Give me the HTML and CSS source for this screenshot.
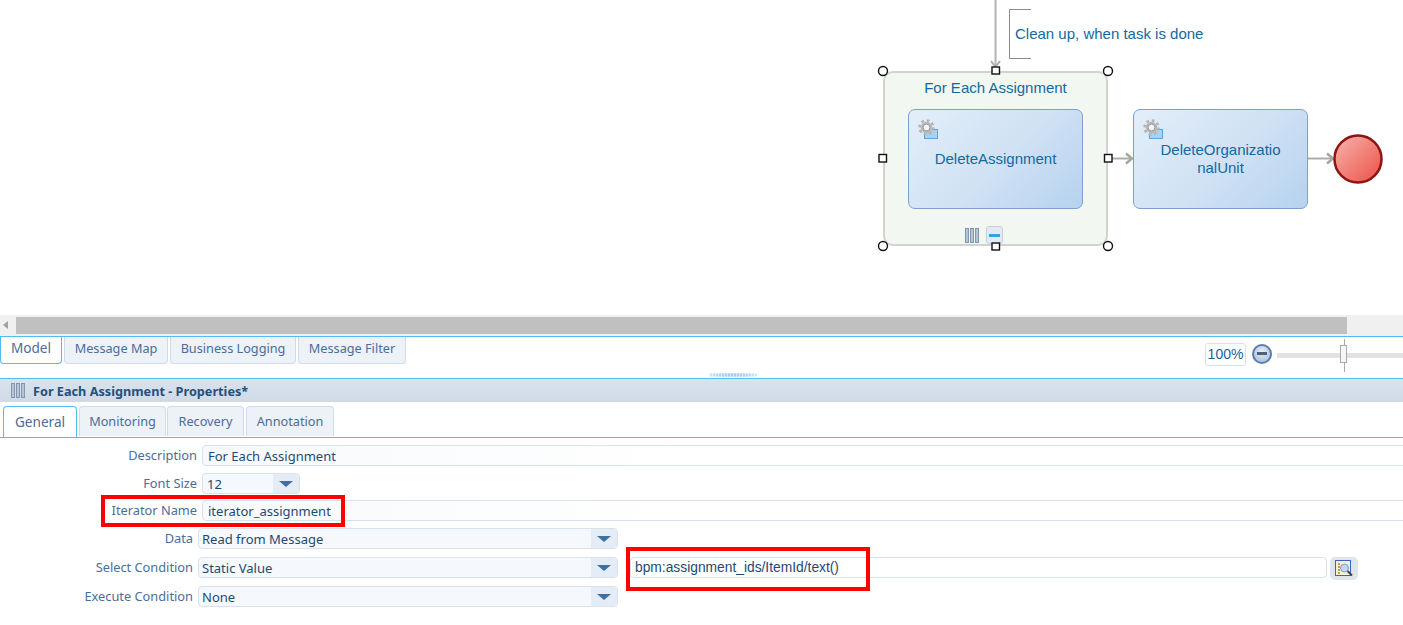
FILE: index.html
```html
<!DOCTYPE html>
<html lang="en">
<head>
<meta charset="utf-8">
<title>For Each Assignment - Properties</title>
<link rel="stylesheet" href="styles.css">
</head>
<body>
<svg width="0" height="0" class="defs">
  <defs>
    <g id="gear">
      <circle cx="8.500" cy="8.500" r="7" fill="none" stroke="#b4b4b4" stroke-width="2.500" stroke-dasharray="2.750 2.750"/>
      <circle cx="8.500" cy="8.500" r="5.800" fill="#b8b8b8"/>
      <circle cx="8.500" cy="8.500" r="3.400" fill="#f4f4f4" stroke="#9a9a9a" stroke-width="1"/>
    </g>
    <g id="bars" fill="#b5c4d6" stroke="#8398ae" stroke-width="1">
      <rect x="0.500" y="0.500" width="3" height="14"/>
      <rect x="5.500" y="0.500" width="3" height="14"/>
      <rect x="10.500" y="0.500" width="3" height="14"/>
    </g>
    <linearGradient id="endfill" x1="0" y1="0" x2="1" y2="1">
      <stop offset="0" stop-color="#f7b5ae"/>
      <stop offset="1" stop-color="#ec4f46"/>
    </linearGradient>
  </defs>
</svg>

<main class="canvas">
  <svg class="wires" width="1403" height="316">
    <path d="M995.500 0V68" stroke="#b3b5b0" stroke-width="2" fill="none"/>
    <path d="M991 61l4.500 6 4.500-6" stroke="#a9aea6" stroke-width="2" fill="none"/>
    <path d="M1031 9.500H1009.500V58.500H1031" stroke="#8c8c8c" fill="none"/>
    <path d="M1112 158.500H1132" stroke="#a9aea6" stroke-width="2" fill="none"/>
    <path d="M1126 153.500l6 5-6 5" stroke="#a0a89f" stroke-width="2.500" fill="none"/>
    <path d="M1308 158.500H1333" stroke="#a9aea6" stroke-width="2" fill="none"/>
    <path d="M1327 153.500l6 5-6 5" stroke="#a0a89f" stroke-width="2.500" fill="none"/>
    <circle cx="1358" cy="159" r="23.500" fill="url(#endfill)" stroke="#8f1414" stroke-width="2.500"/>
  </svg>
  <div class="annotation">Clean up, when task is done</div>
  <div class="loop">
    <div class="loop-title">For Each Assignment</div>
    <div class="loop-marks">
      <svg width="14" height="15" viewBox="0 0 14 15"><use href="#bars"/></svg>
      <span class="collapse"><i></i></span>
    </div>
  </div>
  <div class="task task-inner">
    <svg class="task-icon" width="22" height="22" viewBox="0 0 22 22"><rect x="6.500" y="10.500" width="13" height="9" fill="#a9d2f2" stroke="#5ca5db"/><use href="#gear"/></svg>
    <span>DeleteAssignment</span>
  </div>
  <div class="task task-next">
    <svg class="task-icon" width="22" height="22" viewBox="0 0 22 22"><rect x="6.500" y="10.500" width="13" height="9" fill="#a9d2f2" stroke="#5ca5db"/><use href="#gear"/></svg>
    <span>DeleteOrganizatio<br>nalUnit</span>
  </div>
  <svg class="handles" width="1403" height="316">
    <g fill="#fff" stroke="#111" stroke-width="1.400">
      <circle cx="883" cy="71" r="4.500"/>
      <circle cx="1108" cy="71" r="4.500"/>
      <circle cx="883" cy="246" r="4.500"/>
      <circle cx="1108" cy="246" r="4.500"/>
      <rect x="992" y="67" width="7.500" height="7"/>
      <rect x="879" y="154.500" width="7.500" height="7.500"/>
      <rect x="1104.500" y="154.500" width="7.500" height="7.500"/>
      <rect x="992" y="243" width="7.500" height="7"/>
    </g>
  </svg>
</main>

<div class="hscroll">
  <span class="scroll-arrow"></span>
  <div class="scroll-thumb"></div>
</div>

<nav class="view-bar">
  <div class="tabs view-tabs">
    <span class="tab active">Model</span>
    <span class="tab">Message Map</span>
    <span class="tab">Business Logging</span>
    <span class="tab">Message Filter</span>
  </div>
  <div class="zoom-tool">
    <span class="zoom-value">100%</span>
    <span class="zoom-minus"><i></i></span>
    <div class="zoom-track"><span class="zoom-stem"></span><span class="zoom-thumb"></span></div>
  </div>
  <span class="grip"></span>
</nav>

<section class="props">
  <header class="props-head">
    <svg width="14" height="15" viewBox="0 0 14 15"><use href="#bars"/></svg>
    <h1>For Each Assignment - Properties*</h1>
  </header>
  <div class="tabs prop-tabs">
    <span class="tab active">General</span>
    <span class="tab">Monitoring</span>
    <span class="tab">Recovery</span>
    <span class="tab">Annotation</span>
  </div>
  <div class="form">
    <div class="row">
      <label class="label">Description</label>
      <div class="input grow">For Each Assignment</div>
    </div>
    <div class="row">
      <label class="label">Font Size</label>
      <div class="select small"><span>12</span><b class="caret"></b></div>
    </div>
    <div class="row row-iter">
      <label class="label">Iterator Name</label>
      <div class="input grow">iterator_assignment</div>
    </div>
    <div class="row row-wide row-data">
      <label class="label">Data</label>
      <div class="select wide"><span>Read from Message</span><b class="caret"></b></div>
    </div>
    <div class="row row-wide row-select">
      <label class="label">Select Condition</label>
      <div class="select wide"><span>Static Value</span><b class="caret"></b></div>
      <div class="input xpath">bpm:assignment_ids/ItemId/text()</div>
      <span class="lookup">
        <svg width="18" height="18" viewBox="0 0 18 18">
          <rect x="0.500" y="0.500" width="15" height="15" fill="#f3f0e0" stroke="#3c62c4"/>
          <path d="M3 4h2M3 7h2M3 10h2M3 13h2" stroke="#d39a3c" stroke-width="2"/>
          <circle cx="9.500" cy="8" r="4" fill="#bcd8f5" stroke="#7f9cc4"/>
          <path d="M12.500 11l4.500 4.500" stroke="#444" stroke-width="2"/>
        </svg>
      </span>
    </div>
    <div class="row row-wide">
      <label class="label">Execute Condition</label>
      <div class="select wide"><span>None</span><b class="caret"></b></div>
    </div>
  </div>
</section>

<div class="mark mark-iter"></div>
<div class="mark mark-xpath"></div>
</body>
</html>
```
FILE: styles.css
```css
html, body {
  margin: 0;
  padding: 0;
  background: #fff;
}
body {
  width: 1403px;
  height: 625px;
  overflow: hidden;
  position: relative;
  font-family: "Noto Sans", "Liberation Sans", sans-serif;
  font-size: 13px;
}
.defs { position: absolute; }

/* diagram */
.canvas {
  position: relative;
  height: 315px;
  font-family: "Liberation Sans", sans-serif;
  font-size: 15px;
  color: #12699f;
}
.wires, .handles { position: absolute; left: 0; top: 0; }
.handles { pointer-events: none; }
.annotation { position: absolute; left: 1015px; top: 25px; line-height: 17px; }
.loop {
  position: absolute;
  left: 883px;
  top: 71px;
  width: 221px;
  height: 171px;
  border: 2px solid #cfd5cd;
  border-radius: 10px;
  background: #f3f7f1;
}
.loop-title { text-align: center; margin-top: 6px; line-height: 17px; }
.loop-marks {
  position: absolute;
  left: 80px;
  bottom: 0;
  display: flex;
  align-items: center;
  gap: 7px;
}
.collapse {
  width: 15px;
  height: 16px;
  border: 1px solid #c5cfdb;
  border-radius: 3px;
  background: #e3eaf3;
  display: flex;
  align-items: center;
  justify-content: center;
}
.collapse i { width: 11px; height: 3px; background: #35a0e3; display: block; }
.task {
  position: absolute;
  top: 109px;
  width: 173px;
  height: 98px;
  border: 1px solid #7f9fd0;
  border-radius: 7px;
  background: linear-gradient(135deg, #e3eef9 0%, #cfe1f4 55%, #b6d2ee 100%);
  display: flex;
  align-items: center;
  justify-content: center;
  text-align: center;
  line-height: 18px;
}
.task-inner { left: 908px; }
.task-next { left: 1133px; }
.task-icon { position: absolute; left: 9px; top: 9px; }

/* scrollbar */
.hscroll {
  position: relative;
  height: 21px;
  background: #f0f0f0;
  box-sizing: border-box;
  padding: 2px 0 2px 16px;
}
.scroll-thumb { width: 1331px; height: 17px; background: #c0c0c0; }
.scroll-arrow {
  position: absolute;
  left: 3px;
  top: 6px;
  border-style: solid;
  border-width: 4px 5px 4px 0;
  border-color: transparent #a0a0a0 transparent transparent;
}

/* tabs */
.tabs { display: flex; font-size: 12.7px; }
.tab {
  box-sizing: border-box;
  border: 1px solid #cfdcec;
  background: #edf1f8;
  color: #4b6d9b;
  text-align: center;
}
.view-bar {
  position: relative;
  height: 43px;
  box-sizing: border-box;
  border-top: 1px solid #52bdf2;
  border-bottom: 1px solid #52bdf2;
}
.view-tabs { gap: 2px; }
.view-tabs .tab {
  height: 27px;
  line-height: 22px;
  border-top: 0;
  border-radius: 0 0 4px 4px;
}
.view-tabs .tab:nth-child(1) { width: 62px; background: #fff; border-color: #52bdf2; font-size: 13.6px; border-width: 0 1px 1px 1px; }
.view-tabs .tab:nth-child(2) { width: 104px; }
.view-tabs .tab:nth-child(3) { width: 126px; }
.view-tabs .tab:nth-child(4) { width: 108px; }
.grip {
  position: absolute;
  left: 709px;
  top: 36px;
  width: 48px;
  height: 4px;
  background:
    repeating-linear-gradient(90deg, rgba(255,255,255,0.55) 0 1px, transparent 1px 3px),
    radial-gradient(ellipse at center, #9cc3ee 0%, #c3dcf6 60%, #fff 100%);
}
.zoom-tool {
  position: absolute;
  left: 1205px;
  top: 0;
  right: 0;
  height: 33px;
  display: flex;
  align-items: center;
}
.zoom-value {
  box-sizing: border-box;
  width: 41px;
  height: 23px;
  margin-top: 2px;
  border: 1px solid #d5e0ee;
  border-radius: 3px;
  color: #1b5f96;
  font-family: "Liberation Sans", sans-serif;
  font-size: 14px;
  line-height: 21px;
  text-align: center;
}
.zoom-minus {
  box-sizing: border-box;
  width: 20px;
  height: 20px;
  margin-left: 6px;
  border: 2px solid #587fae;
  border-radius: 50%;
  background: radial-gradient(circle at 50% 35%, #e8eff7, #9db8d6);
  display: flex;
  align-items: center;
  justify-content: center;
}
.zoom-minus i { width: 10px; height: 3px; background: #4d6178; display: block; }
.zoom-track {
  position: relative;
  flex: 1;
  height: 5px;
  margin-top: 3px;
  margin-left: 5px;
  background: #e2e2e2;
}
.zoom-stem {
  position: absolute;
  left: 67px;
  top: -14px;
  width: 1px;
  height: 33px;
  background: #aaa;
}
.zoom-thumb {
  position: absolute;
  left: 63px;
  top: -8px;
  width: 5px;
  height: 16px;
  background: #f3f6fa;
  border: 1px solid #aaa;
}

/* properties */
.props-head {
  height: 23px;
  background: linear-gradient(#d9e3ed, #cfdae6);
  display: flex;
  align-items: center;
  gap: 8px;
  padding-left: 11px;
}
.props-head h1 {
  margin: 0;
  font-size: 12.7px;
  font-weight: 700;
  color: #23507f;
}
.prop-tabs {
  margin-top: 4px;
  height: 31px;
  padding-left: 3px;
  gap: 2px;
  border-bottom: 1px solid #52bdf2;
}
.prop-tabs .tab {
  height: 30px;
  line-height: 28px;
  border-bottom: 0;
  border-radius: 4px 4px 0 0;
}
.prop-tabs .tab:nth-child(1) {
  width: 74px;
  height: 31px;
  margin-bottom: -1px;
  background: #fff;
  border-color: #52bdf2;
  font-size: 13.6px;
  line-height: 30px;
}
.prop-tabs .tab:nth-child(2) { width: 87px; }
.prop-tabs .tab:nth-child(3) { width: 77px; margin-left: -1px; }
.prop-tabs .tab:nth-child(4) { width: 88px; }

.form { padding-top: 7px; }
.row {
  display: flex;
  align-items: flex-start;
  margin-bottom: 7px;
}
.row-iter { margin-top: -1px; }
.row-data { margin-bottom: 8px; }
.row-select { margin-bottom: 6px; }
.label {
  width: 197px;
  margin-right: 5px;
  flex: none;
  text-align: right;
  color: #4b6d9b;
  font-size: 12.8px;
  line-height: 21px;
}
.row-wide .label { width: 193px; }
.input, .select {
  box-sizing: border-box;
  height: 21px;
  border: 1px solid #d8e2ef;
  border-radius: 4px;
  color: #1d4a72;
  line-height: 20px;
  white-space: nowrap;
}
.input {
  padding-left: 5px;
  background: linear-gradient(90deg, #f7f9fc, #fff 40%);
}
.grow { width: 1220px; flex: none; }
.select {
  flex: none;
  display: flex;
  justify-content: space-between;
  padding-left: 3px;
  background: #f5f8fc;
  overflow: hidden;
}
.small { width: 98px; }
.small span { padding-left: 1px; }
.wide { width: 420px; }
.caret {
  position: relative;
  width: 26px;
  background: #e4ecf5;
  border-radius: 0 3px 3px 0;
}
.caret::after {
  content: "";
  position: absolute;
  left: 6px;
  top: 7px;
  border-style: solid;
  border-width: 6px 7px 0 7px;
  border-color: #3f6fa3 transparent transparent transparent;
}
.xpath {
  width: 697px;
  flex: none;
  margin-left: 12px;
  padding-left: 4px;
  font-family: "Liberation Sans", sans-serif;
  font-size: 13.8px;
  background: #fff;
}
.lookup {
  width: 28px;
  height: 23px;
  margin-left: 3px;
  border-radius: 5px;
  background: #e0e5ec;
  display: flex;
  align-items: center;
  justify-content: center;
}

/* red call-outs */
.mark {
  position: absolute;
  box-sizing: border-box;
  border: 4px solid #f00;
}
.mark-iter { left: 101px; top: 495px; width: 244px; height: 32px; }
.mark-xpath { left: 626px; top: 547px; width: 244px; height: 44px; }
```
